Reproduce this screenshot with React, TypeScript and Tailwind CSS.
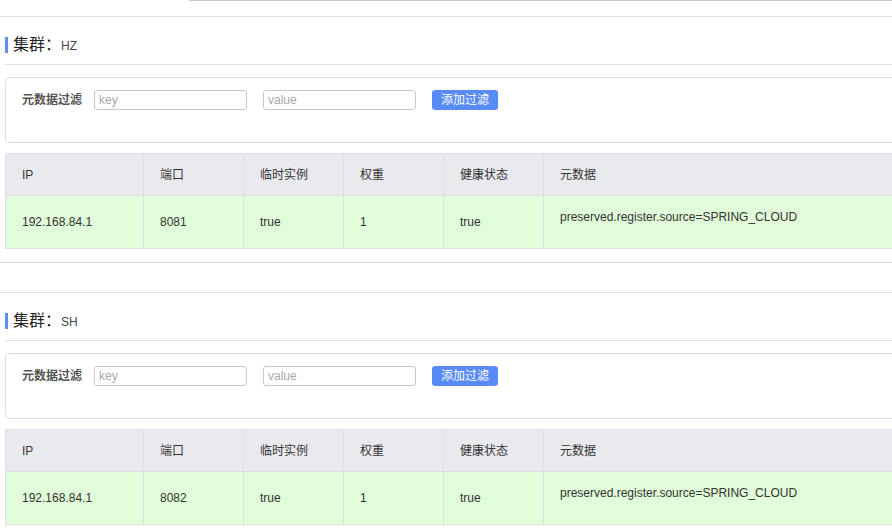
import React from 'react';

const cols = ['IP', '端口', '临时实例', '权重', '健康状态', '元数据'];

const clusters = [
  { name: 'HZ', ip: '192.168.84.1', port: '8081', ephemeral: 'true', weight: '1', healthy: 'true', meta: 'preserved.register.source=SPRING_CLOUD' },
  { name: 'SH', ip: '192.168.84.1', port: '8082', ephemeral: 'true', weight: '1', healthy: 'true', meta: 'preserved.register.source=SPRING_CLOUD' },
];

type Cluster = (typeof clusters)[number];

function ClusterSection({ c }: { c: Cluster }) {
  return <div className="border-y border-[#dcdee2] pl-[5px] pb-[13px]">
      {/* Heading */}
      <div className="flex items-center h-[48px] pt-[9px] border-b border-[#dcdee2]">
        <span className="w-[3px] h-[16px] bg-[#5b8ef7] mr-[5px]" />
        <span className="text-[16px] text-[#222] leading-none">集群：</span>
        <span className="text-[12px] text-[#444] leading-none mt-[2px]">{c.name}</span>
      </div>

      {/* Filter */}
      <div className="mt-[12px] h-[66px] border border-[#dcdee2] rounded-[4px] pt-[12px] pl-[16px]">
        <div className="flex items-center h-[20px]">
          <span className="text-[12px] font-bold text-[#555] w-[60px]">元数据过滤</span>
          <input placeholder="key" className="ml-[12px] w-[153px] h-[20px] border border-[#c5c8ce] rounded-[3px] px-[4px] text-[12px] text-[#333] placeholder-[#a8a8a8] outline-none" />
          <input placeholder="value" className="ml-[16px] w-[153px] h-[20px] border border-[#c5c8ce] rounded-[3px] px-[4px] text-[12px] text-[#333] placeholder-[#a8a8a8] outline-none" />
          <button className="ml-[16px] w-[66px] h-[20px] bg-[#598bf6] rounded-[3px] text-white text-[12px] leading-none">添加过滤</button>
        </div>
      </div>

      {/* Table */}
      <div className="mt-[10px] border-l border-t border-[#dcdee2] text-[12px] text-[#333]">
        <div className="grid grid-cols-[138px_100px_100px_100px_100px_1fr] bg-[#e9eaee]">
          {cols.map(h => <div key={h} className="h-[42px] flex items-center pl-[16px] border-r border-b border-[#dcdee2]">{h}</div>)}
        </div>
        <div className="grid grid-cols-[138px_100px_100px_100px_100px_1fr] bg-[#e1fcd9]">
          {[c.ip, c.port, c.ephemeral, c.weight, c.healthy].map((v, i) => <div key={i} className="h-[53px] flex items-center pl-[16px] border-r border-b border-[#dcdee2]">{v}</div>)}
          <div className="h-[53px] pl-[16px] pt-[12px] border-r border-b border-[#dcdee2]">{c.meta}</div>
        </div>
      </div>
    </div>;
}

export default function App() {
  return <div className="w-full h-[532px] overflow-hidden bg-white" style={{ fontFamily: '"Liberation Sans", "Noto Sans CJK SC", sans-serif' }}>
      <div className="w-[1100px]">
        <div className="ml-[189px] h-[1px] bg-[#c5c8ce] rounded-bl-[2px]" />
        <div className="mt-[15px] flex flex-col gap-[29px]">
          {clusters.map(c => <ClusterSection key={c.name} c={c} />)}
        </div>
      </div>
    </div>;
}
